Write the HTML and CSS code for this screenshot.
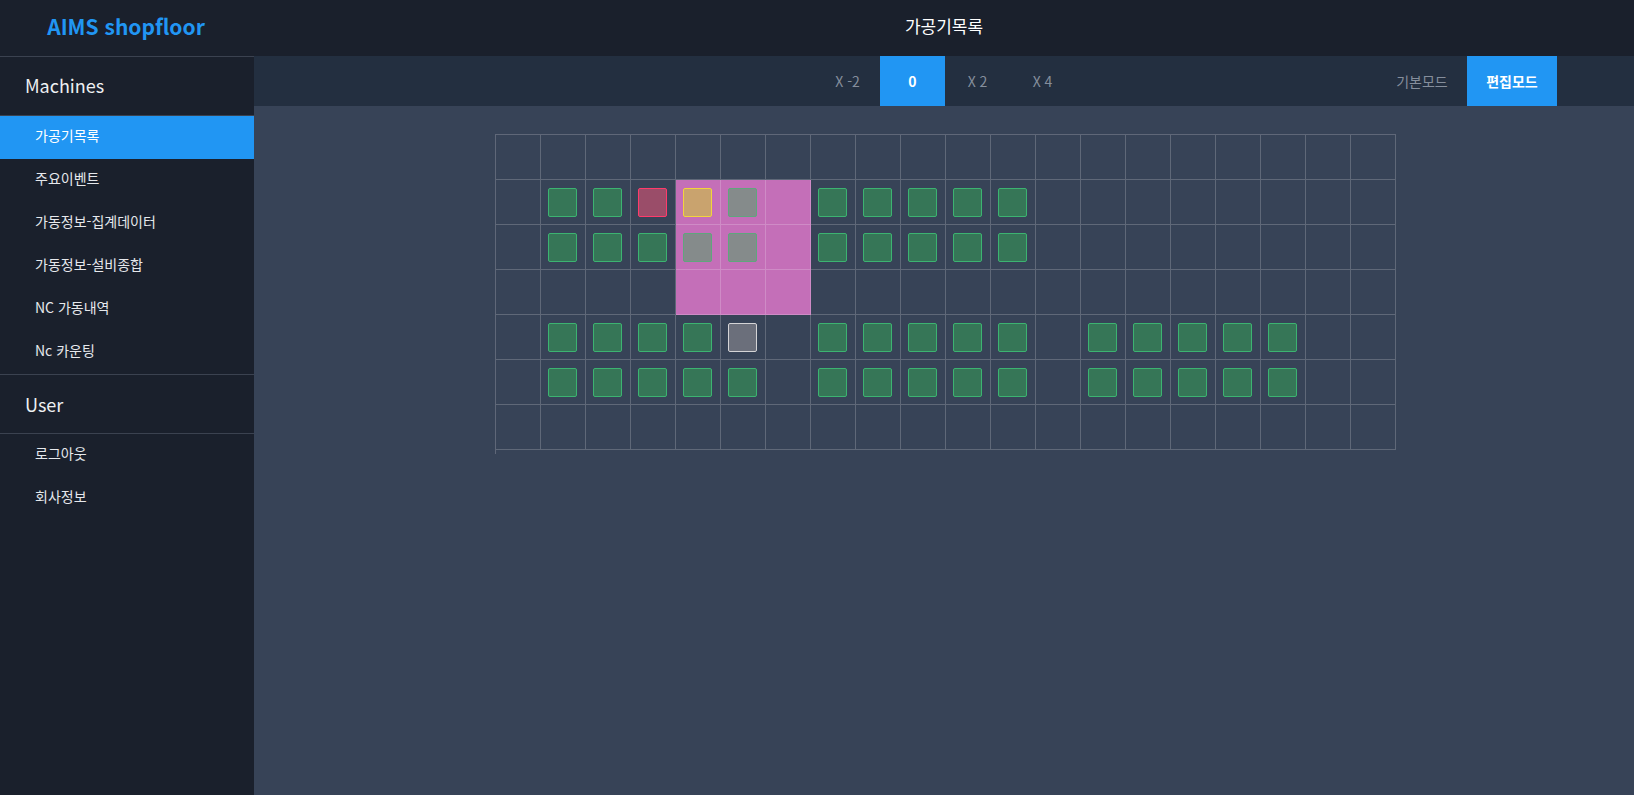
FILE: index.html
```html
<!DOCTYPE html>
<html lang="ko">
<head>
<meta charset="utf-8">
<title>AIMS shopfloor</title>
<link rel="stylesheet" href="styles.css">
</head>
<body>
<div class="app">
  <header class="topbar">
    <div class="brand">AIMS shopfloor</div>
    <div class="page-title">가공기목록</div>
  </header>
  <aside class="sidebar">
    <div class="section-title">Machines</div>
    <nav class="menu">
      <a class="menu-item active">가공기목록</a>
      <a class="menu-item">주요이벤트</a>
      <a class="menu-item">가동정보-집계데이터</a>
      <a class="menu-item">가동정보-설비종합</a>
      <a class="menu-item">NC 가동내역</a>
      <a class="menu-item">Nc 카운팅</a>
    </nav>
    <div class="section-title bordered">User</div>
    <nav class="menu">
      <a class="menu-item">로그아웃</a>
      <a class="menu-item">회사정보</a>
    </nav>
  </aside>
  <main class="main">
    <div class="toolbar">
      <div class="spacer"></div>
      <div class="zoom-group">
        <button class="tb-btn">X -2</button>
        <button class="tb-btn active">0</button>
        <button class="tb-btn">X 2</button>
        <button class="tb-btn">X 4</button>
      </div>
      <div class="mode-group">
        <button class="tb-btn mode">기본모드</button>
        <button class="tb-btn mode active">편집모드</button>
      </div>
    </div>
    <div class="canvas">
      <div class="floor">
        <div class="grid" id="grid"></div>
      </div>
    </div>
  </main>
</div>
<script src="app.js"></script>
</body>
</html>
```

FILE: app.js
```js
(function () {
  var cols = 20, rows = 7;
  // state map: g = green (running), r = red, y = yellow, s = selected/gray, w = idle white
  var layout = {
    1: { 1: 'g', 2: 'g', 3: 'r', 4: 'y', 5: 's', 7: 'g', 8: 'g', 9: 'g', 10: 'g', 11: 'g' },
    2: { 1: 'g', 2: 'g', 3: 'g', 4: 's', 5: 's', 7: 'g', 8: 'g', 9: 'g', 10: 'g', 11: 'g' },
    4: { 1: 'g', 2: 'g', 3: 'g', 4: 'g', 5: 'w', 7: 'g', 8: 'g', 9: 'g', 10: 'g', 11: 'g',
         13: 'g', 14: 'g', 15: 'g', 16: 'g', 17: 'g' },
    5: { 1: 'g', 2: 'g', 3: 'g', 4: 'g', 5: 'g', 7: 'g', 8: 'g', 9: 'g', 10: 'g', 11: 'g',
         13: 'g', 14: 'g', 15: 'g', 16: 'g', 17: 'g' }
  };
  var names = { g: 'run', r: 'alarm', y: 'warn', s: 'picked', w: 'idle' };
  var grid = document.getElementById('grid');
  for (var r = 0; r < rows; r++) {
    for (var c = 0; c < cols; c++) {
      var cell = document.createElement('div');
      cell.className = 'cell';
      if (r >= 1 && r <= 3 && c >= 4 && c <= 6) cell.className += ' selected';
      var st = layout[r] && layout[r][c];
      if (st) {
        var m = document.createElement('div');
        m.className = 'machine ' + names[st];
        cell.appendChild(m);
      }
      grid.appendChild(cell);
    }
  }
})();
```

FILE: styles.css
```css
* { box-sizing: border-box; }
html, body { margin: 0; height: 100%; }
body {
  font-family: "Noto Sans CJK KR", "Noto Sans", sans-serif;
  background: #374357;
  color: #fff;
}
.app {
  display: grid;
  grid-template-columns: 254px 1fr;
  grid-template-rows: 56px 1fr;
  height: 100vh;
}
.topbar {
  grid-column: 1 / 3;
  display: grid;
  grid-template-columns: 254px 1fr;
  align-items: center;
  background: #1a202c;
}
.brand {
  text-align: center;
  font-size: 21px;
  font-weight: 700;
  color: #2196f3;
  padding: 0 2px 4px 0;
}
.page-title {
  text-align: center;
  font-size: 17px;
  color: #fff;
  padding-bottom: 6px;
}
.sidebar {
  background: #1a202c;
  border-top: 1px solid #3b4250;
  display: flex;
  flex-direction: column;
}
.section-title {
  height: 59px;
  display: flex;
  align-items: center;
  padding-left: 25px;
  padding-bottom: 2px;
  font-size: 18px;
  color: #eef0f3;
  border-bottom: 1px solid #3b4250;
}
.section-title.bordered { border-top: 1px solid #3b4250; height: 60px; padding-bottom: 0; }
.menu { display: flex; flex-direction: column; }
.menu-item {
  height: 43px;
  display: flex;
  align-items: center;
  padding-left: 35px;
  padding-bottom: 5px;
  font-size: 14px;
  color: #e6e8ec;
  cursor: pointer;
}
.menu-item.active { background: #2196f3; color: #fff; }
.main {
  display: flex;
  flex-direction: column;
  min-width: 0;
}
.toolbar {
  height: 50px;
  background: #232f40;
  display: grid;
  grid-template-columns: 1fr auto 1fr;
}
.zoom-group, .mode-group { display: flex; }
.zoom-group { padding-left: 2px; }
.mode-group { justify-content: flex-end; padding-right: 77px; }
.tb-btn {
  width: 65px;
  height: 50px;
  border: 0;
  background: transparent;
  font-family: inherit;
  font-size: 14px;
  color: #858e9c;
  padding: 0;
  cursor: pointer;
}
.tb-btn.mode { width: 90px; }
.tb-btn.active { background: #2196f3; color: #fff; font-weight: 700; }
.canvas {
  flex: 1;
  display: flex;
  justify-content: center;
  align-items: flex-start;
  padding-top: 28px;
  padding-left: 2px;
}
.floor {
  border-left: 1px solid #5f6778;
  border-top: 1px solid #5f6778;
  padding-bottom: 4px;
}
.grid {
  display: grid;
  grid-template-columns: repeat(20, 45px);
  grid-auto-rows: 45px;
}
.cell {
  border-right: 1px solid rgba(255, 255, 255, 0.2);
  border-bottom: 1px solid rgba(255, 255, 255, 0.2);
  display: flex;
  align-items: center;
  justify-content: center;
}
.cell.selected { background: #c46fb8; }
.machine {
  width: 29px;
  height: 29px;
  border-radius: 2px;
  border: 1.5px solid #3cb371;
  background: #367657;
  margin: 1px 1px 0 0;
}
.cell.selected .machine.picked { background: #858b8b; border-color: #5fa67d; }
.machine.alarm { background: #9a4d69; border-color: #ff3b6b; }
.machine.warn { background: #c9a36e; border-color: #f2d43c; }
.machine.idle { background: #6b6f7b; border-color: #d4d4d6; }
```
